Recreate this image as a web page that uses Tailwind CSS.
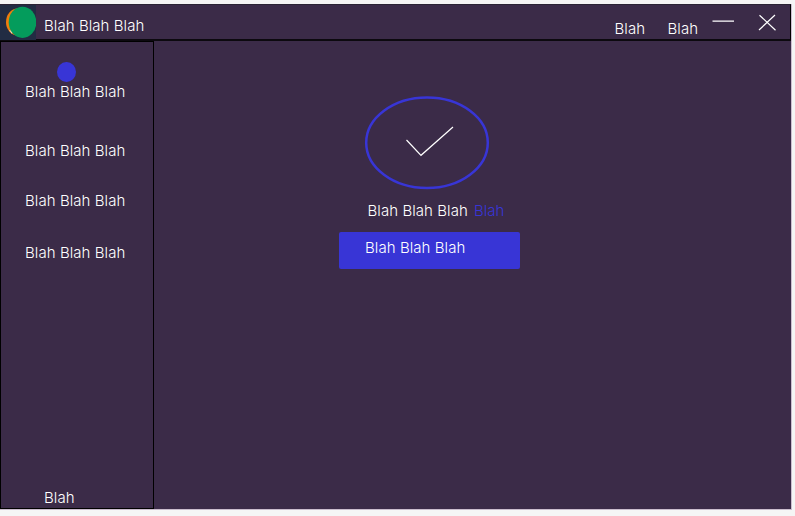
<!DOCTYPE html>
<html lang="en">
<head>
<meta charset="utf-8">
<title>Blah Blah Blah</title>
<script src="https://cdn.jsdelivr.net/npm/@tailwindcss/browser@4"></script>
</head>
<body class="h-[516px] w-[795px] overflow-hidden bg-[#f5f5f5] pt-1 font-['Inter',sans-serif] text-[15px] leading-5 font-light tracking-[0.07px] text-white">
<div class="flex h-[506px] w-[792px] flex-col border-r border-b border-[#cbbdce] bg-[#3b2b48]">
  <header class="flex h-[37px] w-[791px] shrink-0 border-t border-r border-b-2 border-t-[#2b2335] border-r-black border-b-[#0c090f]">
    <div class="h-[35px] w-9 shrink-0 bg-[#222c43]">
      <svg class="block" width="36" height="35" viewBox="0 0 36 35">
        <ellipse cx="17.5" cy="17" rx="11.5" ry="13.5" fill="#f07d0c"/>
        <path d="M9 25l3 4 1-3z" fill="#f3d9c0"/>
        <ellipse cx="22.5" cy="17.3" rx="13.8" ry="15.6" fill="#049c5c"/>
      </svg>
    </div>
    <h1 class="ml-2 pt-[11px]">Blah Blah Blah</h1>
    <nav class="ml-auto flex pt-[14px]">
      <span class="-ml-px w-[53px]">Blah</span>
      <span class="w-[44.5px]">Blah</span>
    </nav>
    <svg class="block shrink-0" width="78" height="34" viewBox="0 0 78 34" fill="none" stroke="#fff" stroke-width="1.2">
      <path d="M0.5 16.2H22M47.5 10.2L63.5 25.2M63 10L47 25"/>
    </svg>
  </header>
  <div class="flex min-h-0 flex-1">
    <aside class="flex w-[154px] shrink-0 flex-col border border-black pl-6">
      <div class="mt-[19.5px] ml-8 h-[20.5px] w-[19px] rounded-[50%] bg-[#3835d6]"></div>
      <div>Blah Blah Blah</div>
      <div class="mt-[39px]">Blah Blah Blah</div>
      <div class="mt-[30px]">Blah Blah Blah</div>
      <div class="mt-[32px]">Blah Blah Blah</div>
      <div class="mt-auto ml-[19px]">Blah</div>
    </aside>
    <main class="flex flex-1 flex-col pt-[55px]">
      <svg class="ml-[210px] block shrink-0" width="126" height="94" viewBox="0 0 126 94" fill="none">
        <ellipse cx="63" cy="46.8" rx="60.8" ry="45.2" stroke="#3835d6" stroke-width="2.5"/>
        <path d="M42.5 44L57 59.3L89 31" stroke="#fff" stroke-width="1.2"/>
      </svg>
      <p class="mt-[11px] ml-[213.5px] flex gap-[6px]"><span>Blah Blah Blah</span><a class="text-[#3835d6]">Blah</a></p>
      <button class="mt-[11px] ml-[185px] flex h-[37px] w-[181px] rounded-[2px] bg-[#3835d6] pt-[5.5px] pl-[26px] font-light tracking-[0.07px]">Blah Blah Blah</button>
    </main>
  </div>
</div>
</body>
</html>
